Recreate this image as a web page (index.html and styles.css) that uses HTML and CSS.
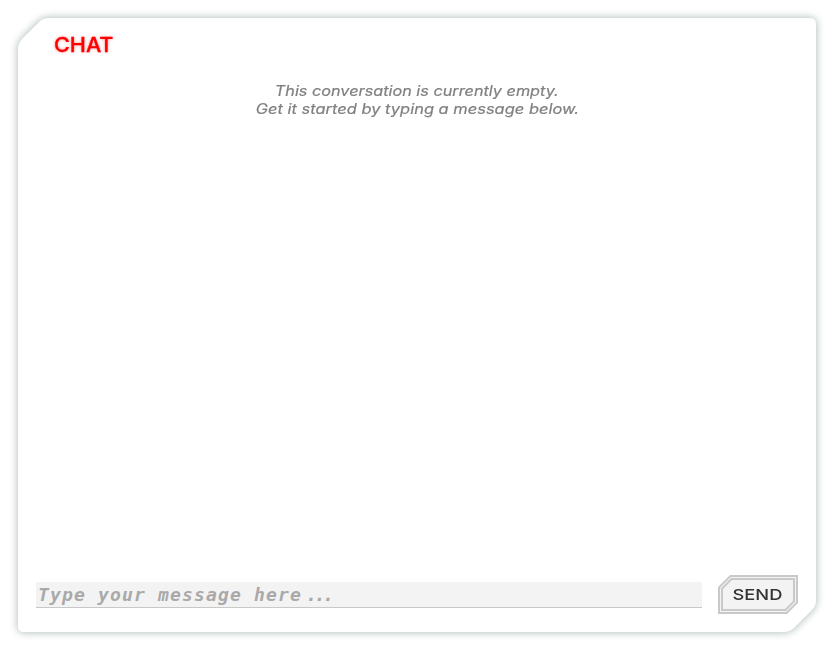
FILE: index.html
```html
<!DOCTYPE html>
<html lang="en">
<head>
<meta charset="utf-8">
<title>Chat</title>
<link rel="stylesheet" href="styles.css">
</head>
<body>
<main class="panel">
  <svg class="panel-shape" width="798" height="614" viewBox="0 0 798 614" aria-hidden="true">
    <path d="M31 0H792Q798 0 798 6V582Q798 588 794 592L776 610Q772 614 765 614H6Q0 614 0 608V31Q0 25 4 21L21 4Q25 0 31 0Z" fill="#fff"/>
  </svg>
  <h1 class="title"><span>CHAT</span></h1>
  <section class="empty">
    <p><span class="line-one">This conversation is currently empty.</span></p>
    <p><span class="line-two">Get it started by typing a message below.</span></p>
  </section>
  <footer class="composer">
    <div class="field" role="textbox">Type your message here<span class="dots">...</span></div>
    <button class="send">
      <svg class="send-shape" width="80" height="39" viewBox="0 0 80 39" aria-hidden="true">
        <path d="M12 0H80V28L69 39H0V12Z" fill="#c9c9c9"/>
        <path d="M12.8 2H78V27.2L68.2 37H2V12.8Z" fill="#f3f3f3"/>
        <path d="M13.2 3H77V26.8L67.8 36H3V13.2Z" fill="#c9c9c9"/>
        <path d="M14 5H75V26L67 34H5V14Z" fill="#f3f3f3"/>
      </svg>
      <span class="send-label">SEND</span>
    </button>
  </footer>
</main>
</body>
</html>
```
FILE: styles.css
```css
* { box-sizing: border-box; }
body { margin: 0; padding: 18px; height: 650px; background: #fff; overflow: hidden; font-family: Inter, sans-serif; }
.panel { position: relative; isolation: isolate; width: 798px; height: 614px; padding: 15px 18px 18px; display: flex; flex-direction: column; }
.panel-shape { position: absolute; inset: 0; z-index: -1; overflow: visible; filter: drop-shadow(0 0 4px #a4b5b2); }
.title { margin: 0 0 0 18px; height: 24px; font-size: 20px; line-height: 24px; font-weight: 500; color: #f00; text-shadow: 0 0 3px rgba(255, 0, 0, .5); }
.title span { display: inline-block; transform: scaleX(1.08); transform-origin: left; -webkit-text-stroke: .3px #f00; }
.empty { flex: 1; padding-top: 25px; text-align: center; color: #808080; font-size: 14.5px; font-style: italic; line-height: 18px; -webkit-text-stroke: .2px #808080; }
.empty p { margin: 0; }
.empty span { display: inline-block; white-space: nowrap; }
.line-one { transform: scaleX(1.12); }
.line-two { transform: scaleX(1.135); }
.composer { display: flex; align-items: center; gap: 16px; height: 39px; }
.field { width: 666px; height: 26px; padding-left: 2px; background: #f3f3f3; border-bottom: 1px solid #c8c8c8; color: #a9a9a9; font: italic bold 18px/25px "DejaVu Sans Mono", monospace; letter-spacing: 1.163px; white-space: nowrap; }
.dots { letter-spacing: -2.3px; margin-left: 4px; }
.send { position: relative; width: 80px; height: 39px; padding: 0; border: 0; background: none; color: #333; font: 500 15px/39px Inter, sans-serif; }
.send-shape { position: absolute; inset: 0; }
.send-label { position: relative; left: -1px; display: inline-block; transform: scaleX(1.22); }
```
